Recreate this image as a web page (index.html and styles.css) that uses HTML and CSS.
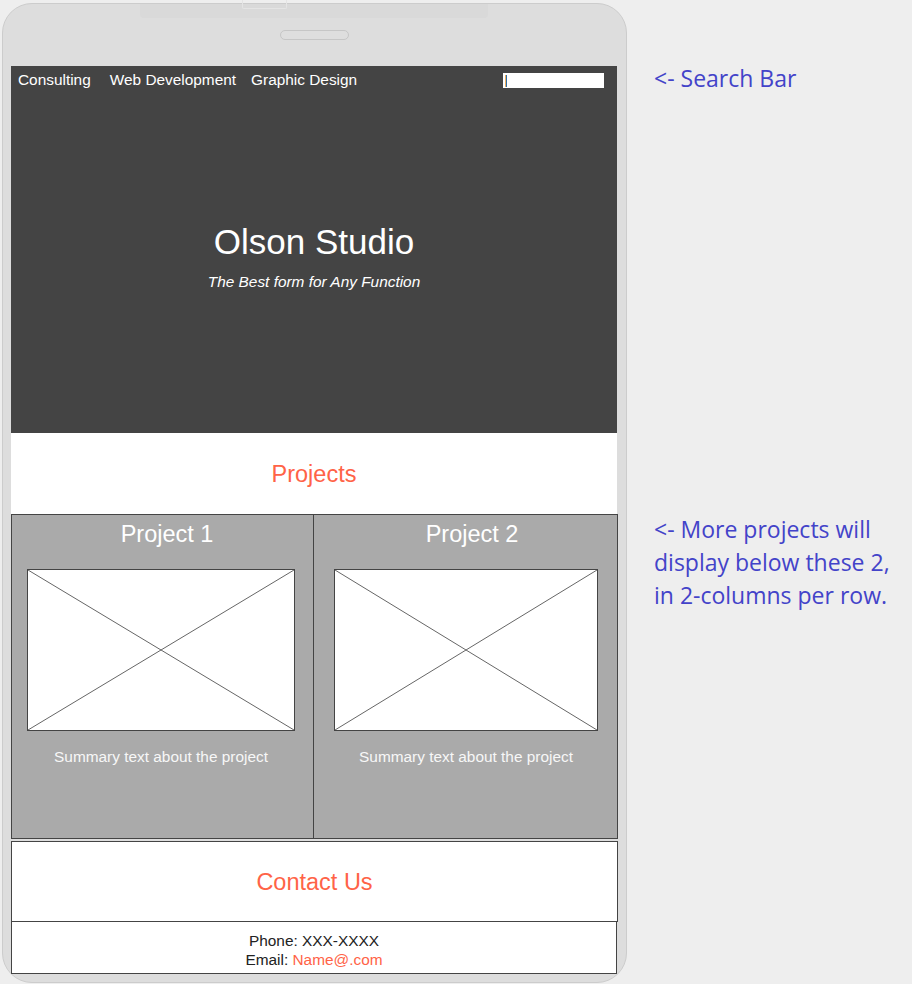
FILE: index.html
```html
<!DOCTYPE html>
<html lang="en">
<head>
<meta charset="utf-8">
<title>Olson Studio wireframe</title>
<link rel="stylesheet" href="styles.css">
</head>
<body>
<div class="canvas">
  <div class="device">
    <div class="device-tab"></div>
    <div class="device-notch"></div>
    <div class="speaker"></div>
    <div class="screen">
      <header class="hero">
        <nav class="nav">
          <a class="nav-link nav-first">Consulting</a>
          <a class="nav-link">Web Development</a>
          <a class="nav-link">Graphic Design</a>
          <div class="search"><span class="caret"></span></div>
        </nav>
        <h1 class="hero-title">Olson Studio</h1>
        <p class="hero-sub">The Best form for Any Function</p>
      </header>
      <section class="band">
        <h2 class="band-title">Projects</h2>
      </section>
      <section class="projects">
        <div class="project project-a">
          <h3 class="project-title">Project 1</h3>
          <div class="placeholder">
            <svg class="x-lines" viewBox="0 0 100 100" preserveAspectRatio="none"><line x1="0" y1="0" x2="100" y2="100"/><line x1="100" y1="0" x2="0" y2="100"/></svg>
          </div>
          <p class="summary">Summary text about the project</p>
        </div>
        <div class="project project-b">
          <h3 class="project-title">Project 2</h3>
          <div class="placeholder">
            <svg class="x-lines" viewBox="0 0 100 100" preserveAspectRatio="none"><line x1="0" y1="0" x2="100" y2="100"/><line x1="100" y1="0" x2="0" y2="100"/></svg>
          </div>
          <p class="summary">Summary text about the project</p>
        </div>
      </section>
      <section class="band band-contact">
        <h2 class="band-title">Contact Us</h2>
      </section>
      <footer class="footer">
        <div>Phone: XXX-XXXX</div>
        <div>Email: <a class="email">Name@.com</a></div>
      </footer>
    </div>
  </div>
  <aside class="notes">
    <p class="note note-search">&lt;- Search Bar</p>
    <p class="note note-projects">&lt;- More projects will<br>display below these 2,<br>in 2-columns per row.</p>
  </aside>
</div>
</body>
</html>
```

FILE: styles.css
```css
* { box-sizing: border-box; }

html, body {
  margin: 0;
  padding: 0;
  background: #eeeeee;
}

body {
  font-family: "Liberation Sans", Arial, sans-serif;
  width: 912px;
  height: 984px;
  overflow: hidden;
}

.canvas {
  display: flex;
  align-items: flex-start;
}

.device {
  position: relative;
  margin: 3px 0 0 2px;
  width: 625px;
  height: 980px;
  background: #dddddd;
  border: 1px solid #cccccc;
  border-radius: 30px;
  padding: 26px 8px 0 8px;
}

.device-tab {
  position: absolute;
  left: 137px;
  top: 0;
  width: 348px;
  height: 14px;
  background: #d9d9d9;
  border-radius: 0 0 4px 4px;
}

.device-notch {
  position: absolute;
  left: 239px;
  top: -4px;
  width: 45px;
  height: 9px;
  border: 1px solid #e4e4e4;
  border-top: none;
  border-radius: 0 0 2px 2px;
}

.speaker {
  width: 69px;
  height: 10px;
  margin: 0 auto;
  border: 1px solid #c6c6c6;
  border-radius: 6px;
  background: #dedede;
}

.screen {
  margin-top: 26px;
  width: 607px;
}

/* hero */
.hero {
  width: 606px;
  height: 367px;
  background: #444444;
  color: #ffffff;
}

.nav {
  display: flex;
  align-items: center;
  height: 27px;
  padding: 0 13px 0 7px;
  font-size: 15.4px;
  gap: 15px;
}

.nav-link { color: #ffffff; }
.nav-first { margin-right: 4px; }

.search {
  margin-left: auto;
  margin-top: 2px;
  width: 101px;
  height: 15px;
  background: #ffffff;
  padding: 2px 0 0 3px;
}

.caret {
  display: block;
  width: 1px;
  height: 12px;
  background: #2f6fa8;
  box-shadow: -1px 0 0 #f0b060;
}

.hero-title {
  margin: 129px 0 0;
  font-weight: normal;
  font-size: 35px;
  line-height: 40px;
  text-align: center;
}

.hero-sub {
  margin: 10px 0 0;
  font-size: 15.4px;
  line-height: 20px;
  font-style: italic;
  text-align: center;
}

/* section bands */
.band {
  width: 606px;
  height: 81px;
  background: #ffffff;
  display: flex;
  align-items: center;
  justify-content: center;
  padding-top: 1px;
}

.band-title {
  margin: 0;
  font-weight: normal;
  font-size: 23.5px;
  color: #ff6347;
}

.band-contact {
  width: 607px;
  margin-top: 2px;
  border: 1px solid #444444;
}

/* projects grid */
.projects {
  width: 607px;
  height: 325px;
  display: grid;
  grid-template-columns: 302px 1fr;
  background: #aaaaaa;
  border: 1px solid #444444;
}

.project {
  padding-top: 5px;
}

.project-a {
  border-right: 1px solid #444444;
  padding-left: 15px;
  padding-right: 18px;
}

.project-b {
  padding-left: 20px;
  padding-right: 19px;
}

.project-title {
  margin: 0;
  padding-left: 12px;
  font-weight: normal;
  font-size: 23.5px;
  line-height: 28px;
  color: #ffffff;
  text-align: center;
}

.placeholder {
  margin-top: 21px;
  height: 162px;
  background: #ffffff;
  border: 1px solid #444444;
}

.x-lines {
  display: block;
  width: 100%;
  height: 100%;
}

.x-lines line {
  stroke: #666666;
  stroke-width: 1;
  vector-effect: non-scaling-stroke;
}

.summary {
  margin: 17px 0 0;
  font-size: 15.4px;
  line-height: 17px;
  color: #f7f7f7;
  text-align: center;
}

/* footer */
.footer {
  width: 606px;
  height: 53px;
  margin-top: -1px;
  background: #ffffff;
  border: 1px solid #444444;
  padding-top: 9px;
  font-size: 15.4px;
  line-height: 19px;
  color: #222222;
  text-align: center;
}

.email { color: #ff6347; }

/* annotations */
.notes {
  margin-left: 27px;
  padding-top: 62px;
  font-family: "Open Sans", "Noto Sans", sans-serif;
  color: #4343c9;
  font-size: 23px;
  line-height: 33px;
}

.note { margin: 0; white-space: nowrap; }
.note-projects { margin-top: 418px; }
```
